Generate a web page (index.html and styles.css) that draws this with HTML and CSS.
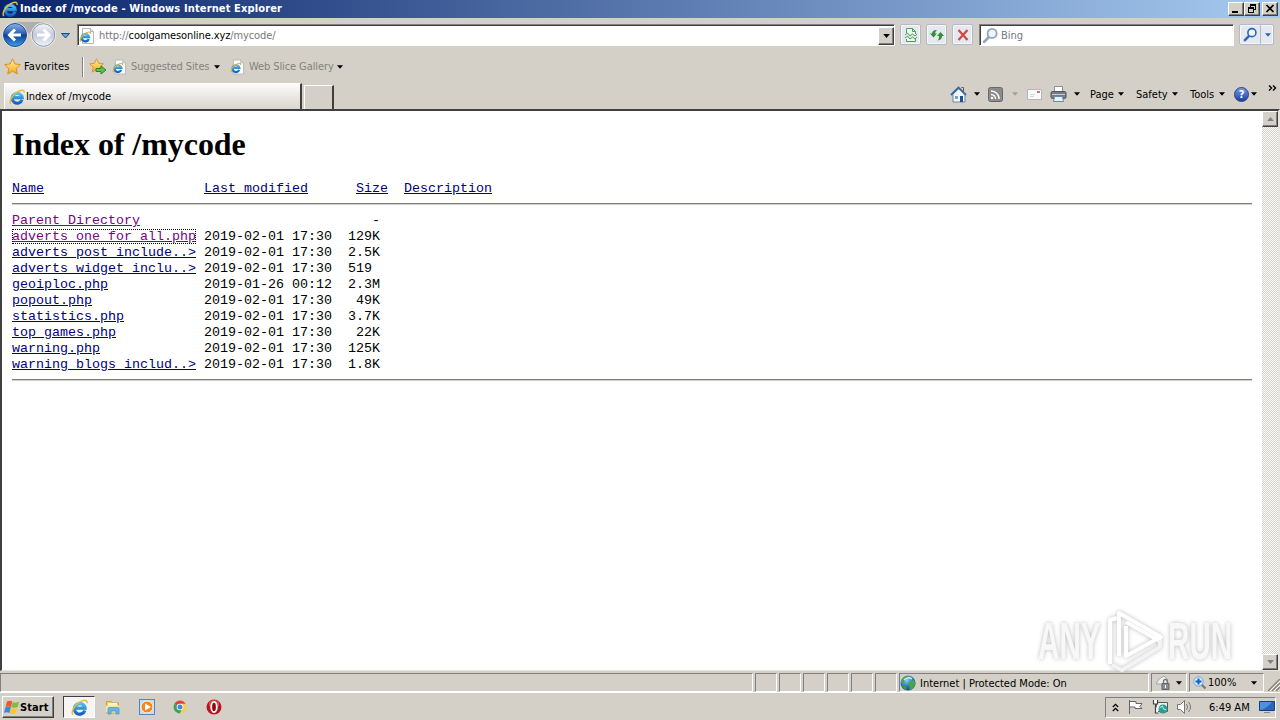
FILE: index.html
```
<!DOCTYPE html>
<html lang="en">
<head>
    <meta charset="UTF-8">
    <title>Index of /mycode</title>
    <link rel="stylesheet" href="styles.css">
</head>
<body>
    <svg class="defs" width="0" height="0">
        <defs>
            <linearGradient id="blue-ball" x1="0" y1="0" x2="0" y2="1">
                <stop offset="0" stop-color="#8fb4e6"/>
                <stop offset=".45" stop-color="#2a5fb4"/>
                <stop offset=".5" stop-color="#0d3c92"/>
                <stop offset="1" stop-color="#3fa0e8"/>
            </linearGradient>
            <linearGradient id="grey-ball" x1="0" y1="0" x2="0" y2="1">
                <stop offset="0" stop-color="#f4f6fa"/>
                <stop offset=".5" stop-color="#c3cad8"/>
                <stop offset="1" stop-color="#f2f5fa"/>
            </linearGradient>
            <linearGradient id="star-fill" x1="0" y1="0" x2="0" y2="1">
                <stop offset="0" stop-color="#fff3a0"/>
                <stop offset="1" stop-color="#f9a81a"/>
            </linearGradient>
            <linearGradient id="e-fill" x1="0" y1="0" x2="0" y2="1">
                <stop offset="0" stop-color="#4cc0f4"/>
                <stop offset="1" stop-color="#1560bd"/>
            </linearGradient>
            <radialGradient id="globe-fill" cx=".4" cy=".3" r=".8">
                <stop offset="0" stop-color="#8fd0f5"/>
                <stop offset=".6" stop-color="#2467b8"/>
                <stop offset="1" stop-color="#123a80"/>
            </radialGradient>
        </defs>
        <symbol id="ie" viewBox="0 0 16 16">
            <path d="M13 10.800A5 5 0 1 1 13.200 8.600H4.400" fill="none" stroke="url(#e-fill)" stroke-width="3.100"/>
            <path d="M2 14.800C-.6 13 3 6.200 8 3C11.500.9 15.800 0 15 4" fill="none" stroke="#efbd30" stroke-width="1.400"/>
        </symbol>
        <symbol id="ie-page" viewBox="0 0 16 16">
            <path d="M3.500.5h8l3 3v12h-11z" fill="#fff" stroke="#b4b4ba"/>
            <path d="M11.500.5v3h3" fill="#ddd" stroke="#b4b4ba"/>
            <path d="M9.800 11A3.700 3.700 0 1 1 10 9H3.800" fill="none" stroke="url(#e-fill)" stroke-width="2.400"/>
            <path d="M1.500 13.700C0 11 4 6.500 8 4.500C10 3.600 11.800 3.600 11.300 6" fill="none" stroke="#e0b030" stroke-width="1.100"/>
        </symbol>
        <symbol id="star" viewBox="0 0 16 16">
            <path d="M8 .8l2.200 4.800 5.100.6-3.800 3.600 1 5.200L8 12.400 3.500 15l1-5.200L.7 6.200l5.100-.6z" fill="url(#star-fill)" stroke="#d98a1c" stroke-width=".9"/>
        </symbol>
        <symbol id="arrow" viewBox="0 0 5 3"><path d="M0 0h5L2.500 3z" fill="currentColor"/></symbol>
        <symbol id="glass" viewBox="0 0 16 16">
            <path d="M6.800 9.200L2 14" stroke="currentColor" stroke-width="2.600" stroke-linecap="round"/>
            <circle cx="9.500" cy="6" r="4.300" fill="#eef5ff" stroke="currentColor" stroke-width="1.700"/>
        </symbol>
    </svg>

    <div class="titlebar">
        <svg class="title-icon" width="16" height="16"><use href="#ie"/></svg>
        <span class="title-text">Index of /mycode - Windows Internet Explorer</span>
        <div class="window-buttons">
            <svg class="bevel" width="16" height="14" viewBox="0 0 14 12"><path d="M3 8h6v2H3z"/></svg>
            <svg class="bevel" width="16" height="14" viewBox="0 0 14 12"><path d="M5 1h6v6H9V6h1V3H6v1H5zM3 4h6v6H3zm1 2v3h4V6z" fill-rule="evenodd"/></svg>
            <svg class="bevel close" width="16" height="14" viewBox="0 0 14 12"><path d="M3.500 2l7 7M10.500 2l-7 7" stroke="#000" stroke-width="1.700"/></svg>
        </div>
    </div>

    <div class="navbar">
        <svg class="travel" width="74" height="30" viewBox="0 0 74 30">
            <path d="M14 2h30v4q-9-1-15 8Q24 6 14 6z" fill="#b2aeb0"/>
            <circle cx="15" cy="15" r="12.500" fill="#edf0f5"/>
            <circle cx="15" cy="15" r="11.500" fill="url(#blue-ball)" stroke="#254a85"/>
            <path d="M21 15H10M15 9.500L9.500 15l5.500 5.500" fill="none" stroke="#fff" stroke-width="3"/>
            <circle cx="43.500" cy="15" r="12.500" fill="#edf0f5"/>
            <circle cx="43.500" cy="15" r="11.300" fill="url(#grey-ball)" stroke="#8b96ab"/>
            <path d="M37 15h11M43.500 9.500L49 15l-5.500 5.500" fill="none" stroke="#fff" stroke-width="3"/>
            <path d="M61.500 13.500h8l-4 4.500z" fill="#5aa5d8" stroke="#1b4b80"/>
        </svg>
        <div class="field address">
            <svg width="16" height="16"><use href="#ie-page"/></svg>
            <span class="url">http://<b>coolgamesonline.xyz</b>/mycode/</span>
            <div class="bevel combo"><svg width="7" height="4"><use href="#arrow"/></svg></div>
        </div>
        <div class="tool-button">
            <svg width="14" height="16" viewBox="0 0 14 16" fill="none" stroke="#4fa052">
                <path d="M2.500 6V1.500h6l3 3V7M8.500 1.500v3h3M2.500 12v2.500h9V12" fill="#eef8ee"/>
                <path d="M1 8l2.500-2L6 9l2.500-2L11 9l2-2M1 11l2.500-2L6 12l2.500-2 2.500 2 2-2"/>
            </svg>
        </div>
        <div class="tool-button">
            <svg width="16" height="14" viewBox="0 0 16 14" fill="#2f8f35">
                <path d="M1 5.500l3.500 4 3.500-4H6q0-2 2-3.500Q3.500 1.500 3 5.500z"/>
                <path d="M8 8l3.500-4L15 8h-2q0 4-4.500 4.500Q10.300 11 10 8z"/>
            </svg>
        </div>
        <div class="tool-button">
            <svg width="14" height="14" viewBox="0 0 14 14"><path d="M2.500 2l9 10M11.500 2l-9 10" stroke="#cf4a45" stroke-width="2.300"/></svg>
        </div>
        <div class="field search">
            <svg class="pale-glass" width="17" height="17"><use href="#glass"/></svg>
            <span>Bing</span>
        </div>
        <div class="tool-button search-go">
            <svg class="blue-glass" width="15" height="15"><use href="#glass"/></svg>
            <i></i>
            <svg class="blue-arrow" width="6" height="4"><use href="#arrow"/></svg>
        </div>
    </div>

    <div class="favbar">
        <svg width="17" height="17"><use href="#star"/></svg>
        <span class="fav-label">Favorites</span>
        <i class="divider"></i>
        <svg width="18" height="17" viewBox="0 0 18 17">
            <use href="#star" width="15" height="15"/>
            <path d="M7 10.500h5V8l5 4-5 4v-2.500H7z" fill="#5cc449" stroke="#28852b"/>
        </svg>
        <svg class="fav-page" width="15" height="16"><use href="#ie-page"/></svg>
        <span class="fav-link suggested">Suggested Sites</span>
        <svg width="6" height="4"><use href="#arrow"/></svg>
        <svg class="fav-page second" width="15" height="16"><use href="#ie-page"/></svg>
        <span class="fav-link slice">Web Slice Gallery</span>
        <svg width="6" height="4"><use href="#arrow"/></svg>
    </div>

    <div class="tabbar">
        <div class="tab">
            <svg width="16" height="16"><use href="#ie"/></svg>
            <span>Index of /mycode</span>
        </div>
        <div class="new-tab"></div>
        <div class="commands">
            <svg width="17" height="17" viewBox="0 0 17 17">
                <path d="M3 8v8h12V8L9 2.500z" fill="#f3f6fb" stroke="#6f86a8"/>
                <path d="M1 9l7.500-7.500L16 9" fill="none" stroke="#36679f" stroke-width="1.800"/>
                <path d="M11.500 1.500h2v4" stroke="#884b3b" fill="none"/>
                <path d="M5 10h3v3H5z" fill="#6fa6d8"/><path d="M10 10h3v6h-3z" fill="#234f8c"/>
            </svg>
            <svg class="caret home-caret" width="6" height="4"><use href="#arrow"/></svg>
            <svg class="feed" width="15" height="15" viewBox="0 0 15 15">
                <rect x=".5" y=".5" width="14" height="14" rx="2" fill="#8b8b8b" stroke="#686868"/>
                <path d="M3 7.500A4.500 4.500 0 0 1 7.500 12M3 4A8 8 0 0 1 11 12" fill="none" stroke="#fff" stroke-width="1.500"/>
                <circle cx="4" cy="11" r="1.300" fill="#fff"/>
            </svg>
            <svg class="caret faded" width="6" height="4"><use href="#arrow"/></svg>
            <svg class="mail" width="15" height="11" viewBox="0 0 15 11">
                <path d="M.5.5h14v10H.5z" fill="#fbfbfb" stroke="#b4b4b8"/>
                <path d="M10 2h3v2h-3z" fill="#d86f78"/><path d="M3 5.500h5M3 7.500h4" stroke="#d4d4dc"/>
            </svg>
            <svg class="printer" width="17" height="17" viewBox="0 0 17 17">
                <path d="M4.500 6V.5h8V6" fill="#fff" stroke="#8a8f98"/>
                <rect x="1" y="5.500" width="15" height="7" rx="1.500" fill="#777c84" stroke="#50545c"/>
                <path d="M2 8.500h13" stroke="#c9cdd5"/>
                <path d="M4.500 10.500h8l1 5h-10z" fill="#e8f2fc" stroke="#6689aa"/>
            </svg>
            <svg class="caret print-caret" width="6" height="4"><use href="#arrow"/></svg>
            <span class="menu page">Page</span><svg class="caret" width="6" height="4"><use href="#arrow"/></svg>
            <span class="menu safety">Safety</span><svg class="caret" width="6" height="4"><use href="#arrow"/></svg>
            <span class="menu tools">Tools</span><svg class="caret" width="6" height="4"><use href="#arrow"/></svg>
            <div class="help">?</div>
            <svg class="caret help-caret" width="6" height="4"><use href="#arrow"/></svg>
            <svg class="chevron" width="9" height="7" viewBox="0 0 9 7"><path d="M1 .5l2.500 2.500L1 5.500M5 .5l2.500 2.500L5 5.500" fill="none" stroke="#000" stroke-width="1.400"/></svg>
        </div>
    </div>

    <div class="viewport">
        <div class="document">
            <h1>Index of /mycode</h1>
            <pre class="head"><a href="#">Name</a>                    <a href="#">Last modified</a>      <a href="#">Size</a>  <a href="#">Description</a></pre>
            <hr>
            <pre class="listing"><a href="#" class="visited">Parent Directory</a>                             -
<a href="#" class="visited focused">adverts_one_for_all.php</a> 2019-02-01 17:30  129K
<a href="#">adverts_post_include..&gt;</a> 2019-02-01 17:30  2.5K
<a href="#">adverts_widget_inclu..&gt;</a> 2019-02-01 17:30  519
<a href="#">geoiploc.php</a>            2019-01-26 00:12  2.3M
<a href="#">popout.php</a>              2019-02-01 17:30   49K
<a href="#">statistics.php</a>          2019-02-01 17:30  3.7K
<a href="#">top_games.php</a>           2019-02-01 17:30   22K
<a href="#">warning.php</a>             2019-02-01 17:30  125K
<a href="#">warning_blogs_includ..&gt;</a> 2019-02-01 17:30  1.8K</pre>
            <hr>
        </div>
        <div class="scrollbar">
            <div class="bevel"><svg class="up" width="7" height="4"><use href="#arrow"/></svg></div>
            <div class="bevel"><svg width="7" height="4"><use href="#arrow"/></svg></div>
        </div>
        <div class="watermark">
            <span class="any">ANY</span>
            <svg width="58" height="62" viewBox="0 0 58 62" fill="none" stroke="#fff" stroke-width="4" stroke-linejoin="round">
                <path d="M3 54V10l7-2"/>
                <path d="M12 46V3l42 24-3 3L19 12"/>
                <path d="M19 16v30l29-16"/>
                <path d="M5 55l10 5 38-23v-7" stroke="#f3f3f3"/>
            </svg>
            <span class="run">RUN</span>
        </div>
    </div>

    <div class="statusbar">
        <div class="pane main"></div>
        <div class="pane"></div>
        <div class="pane"></div>
        <div class="pane"></div>
        <div class="pane"></div>
        <div class="pane"></div>
        <div class="pane"></div>
        <div class="pane zone">
            <svg width="16" height="16" viewBox="0 0 16 16">
                <circle cx="8" cy="8" r="7.500" fill="url(#globe-fill)"/>
                <path d="M2 4q4-4 7-3L7 4 5 5 4 8 1 8zM9 7l5-2 1.500 4-3 5-3 1V11L8 9z" fill="#44a847"/>
                <path d="M3 10l3 1 1 4q-4-1-5-5z" fill="#399b48"/>
                <path d="M4 5q4-4 8-1" fill="none" stroke="#d4f1fb" stroke-width="1.500"/>
            </svg>
            <span>Internet | Protected Mode: On</span>
        </div>
        <div class="pane lock">
            <svg width="17" height="15" viewBox="0 0 17 15">
                <path d="M1 9q2-6 8-8l3 3v5H7z" fill="#eee" stroke="#a5a5a5"/>
                <path d="M7 8.500h7v6H7z" fill="#8c8c8c" stroke="#666"/>
                <path d="M8.500 8V6.500a2 2 0 0 1 4 0V8" fill="none" stroke="#777" stroke-width="1.300"/>
                <path d="M10 10h1v3h-1z" fill="#fff"/>
            </svg>
            <svg width="6" height="4"><use href="#arrow"/></svg>
        </div>
        <div class="pane zoom">
            <svg width="14" height="14" viewBox="0 0 14 14">
                <path d="M8.500 8.500l4 4" stroke="#777" stroke-width="2.300"/>
                <circle cx="5.500" cy="5.500" r="4.700" fill="#d9edff" stroke="#71a2d4"/>
                <path d="M5.500 2.500v6M2.500 5.500h6" stroke="#145fb8" stroke-width="2"/>
            </svg>
            <span>100%</span>
            <svg width="6" height="4"><use href="#arrow"/></svg>
        </div>
        <svg class="grip" width="12" height="12"><path d="M0 12L12 0M4 12l8-8M8 12l4-4" stroke="#85817b" stroke-width="1.500"/><path d="M2 12L12 2M6 12l6-6" stroke="#fff"/></svg>
    </div>

    <div class="taskbar">
        <div class="bevel start">
            <svg width="16" height="15" viewBox="0 0 16 15">
                <path d="M3 1.500q3-1.500 5.300 0L7 7.200Q4.500 5.700 1.500 7z" fill="#e75b2d"/>
                <path d="M8.700 2q3 1.500 6.500-.5L13.700 7q-3 1.500-6.200.3z" fill="#7fbd3e"/>
                <path d="M1.300 7.600q3-1.500 5.500 0L5.500 13Q3 11.500 0 13z" fill="#3b89d8"/>
                <path d="M7.300 8q3 1.300 6.100 0L12 13.300q-3 1.500-6 .2z" fill="#f7c831"/>
            </svg>
            <span>Start</span>
        </div>
        <div class="active-task"><svg width="17" height="17"><use href="#ie"/></svg></div>
        <svg class="launch" width="18" height="18" viewBox="0 0 18 18">
            <path d="M2.500 3.500h5l1 1.500h6v10h-12z" fill="#f2d375" stroke="#c99d42"/>
            <path d="M4 5h9v4H4z" fill="#fff5c5"/><path d="M2 7.500h13v7H2z" fill="#f8e39a"/>
            <path d="M4 16v-5q0-1.500 1.500-1.500h8Q15 9.500 15 11v5h-3v-3H7v3z" fill="#67b7e6" stroke="#418fc0" stroke-width=".7"/>
        </svg>
        <svg class="launch" width="18" height="18" viewBox="0 0 18 18">
            <rect x="1.500" y="1.500" width="15" height="15" fill="#c3def4" stroke="#4f89bd"/>
            <circle cx="9" cy="9" r="6" fill="#ef8a22" stroke="#fff3dc"/><path d="M7 5.500v7L13 9z" fill="#fff"/>
        </svg>
        <svg class="launch" width="18" height="18" viewBox="0 0 18 18">
            <path d="M9 9L3.400 5.800A6.500 6.500 0 0 1 14.600 5.800z" fill="#dc4437"/>
            <path d="M3.400 5.800A6.500 6.500 0 0 0 9 15.500L11.500 10z" fill="#36a654"/>
            <path d="M14.600 5.800A6.500 6.500 0 0 1 9 15.500L12 9 9 5.800z" fill="#f9cf3c"/>
            <circle cx="9" cy="9" r="3.300" fill="#fff"/><circle cx="9" cy="9" r="2.500" fill="#4285e8"/>
        </svg>
        <svg class="launch" width="18" height="18" viewBox="0 0 18 18">
            <circle cx="9" cy="9" r="7.500" fill="#b8161d"/><path d="M4 4q5-4 10 0v4H4z" fill="#d9484c"/>
            <ellipse cx="9" cy="9" rx="2.800" ry="5.200" fill="#94070d" stroke="#fff" stroke-width="1.800"/>
        </svg>
        <div class="tray">
            <svg width="7" height="9" viewBox="0 0 7 9"><path d="M.8 4l2.700-2.700L6.200 4M.8 8l2.700-2.700L6.200 8" fill="none" stroke="#000" stroke-width="1.300"/></svg>
            <svg class="flag" width="16" height="16" viewBox="0 0 16 16"><path d="M1.500 1v14M2 2.500h6v2h6l-2 3 2 2H7V8H2" fill="#fff" stroke="#666"/></svg>
            <svg class="network" width="17" height="16" viewBox="0 0 17 16">
                <path d="M4.500 3.500h11v9h-11z" fill="#e5f3f2" stroke="#555"/>
                <circle cx="11" cy="10" r="4.500" fill="#2b9b95"/><path d="M7.500 9l3-2 1 3 3 1" stroke="#c5efe4" fill="none"/>
                <path d="M1.500 1v4h4V1M3.500 5v9h3" fill="#fff" stroke="#444" stroke-width="1.200"/>
            </svg>
            <svg class="volume" width="17" height="16" viewBox="0 0 17 16">
                <path d="M1.500 5.500h3l4-4v13l-4-4h-3z" fill="#fff" stroke="#777"/>
                <path d="M10.500 5q2 3 0 6M12.500 3q4 5 0 10" fill="none" stroke="#777"/>
            </svg>
            <span class="clock">6:49 AM</span>
            <svg class="desktop" width="16" height="14" viewBox="0 0 16 14">
                <path d="M.5 1.500h15v9H.5z" fill="#2867bd" stroke="#183e7e"/><path d="M1 10q6-1 12-8H1z" fill="#4d91df"/><path d="M5 12.500h6" stroke="#888"/>
            </svg>
        </div>
    </div>
</body>
</html>
```
FILE: styles.css
```
* {
    box-sizing: border-box;
}

body {
    margin: 0;
    width: 1280px;
    height: 720px;
    overflow: hidden;
    display: flex;
    flex-direction: column;
    background-color: #d4d0c8;
    color: #000;
    font-family: "DejaVu Sans Condensed", "DejaVu Sans", sans-serif;
    font-stretch: condensed;
    font-size: 11px;
    white-space: nowrap;
}

svg, i {
    display: block;
    flex-shrink: 0;
}

.defs {
    position: absolute;
}

.bevel {
    background: #d4d0c8;
    border: 1px solid;
    border-color: #fff #404040 #404040 #fff;
    box-shadow: inset -1px -1px #808080;
}

/* title bar */
.titlebar {
    height: 18px;
    display: flex;
    align-items: center;
    padding: 0 2px;
    background: linear-gradient(to right, #0a246a, #a6caf0);
    color: #fff;
    font-weight: bold;
}

.title-text {
    margin-left: 2px;
    padding-bottom: 1px;
    letter-spacing: .13px;
}

.window-buttons {
    display: flex;
    margin-left: auto;
}

.close {
    margin-left: 2px;
}

/* address bar */
.navbar {
    height: 34px;
    display: flex;
    align-items: center;
    padding-bottom: 1px;
}

.field {
    height: 22px;
    display: flex;
    align-items: center;
    background: #fff;
    border: 1px solid;
    border-color: #808080 #fff #fff #808080;
    box-shadow: inset 1px 1px #404040;
    color: #777;
}

.address {
    width: 818px;
    margin: 1px 5px 0 3px;
    padding: 1px 0 0 1px;
}

.url {
    margin-left: 4px;
    letter-spacing: -.11px;
}

.url b {
    color: #000;
    font-weight: normal;
}

.combo {
    width: 16px;
    height: 18px;
    margin-left: auto;
    padding: 6px 4px;
    color: #000;
}

.tool-button {
    width: 21px;
    height: 21px;
    margin-right: 5px;
    display: flex;
    align-items: center;
    justify-content: center;
    background: #e5e9ef;
    border: 1px solid #b2bac9;
    border-radius: 2px;
    box-shadow: inset 0 0 0 1px #f5f7fa;
}

.search {
    width: 255px;
    margin: 1px 5px 0 1px;
    padding-left: 2px;
}

.search span {
    margin-left: 2px;
}

.pale-glass {
    color: #91a5bc;
}

.search-go {
    width: 35px;
    margin: 0;
}

.search-go i {
    width: 1px;
    height: 19px;
    margin: 0 4px 0 2px;
    background: #b2bac9;
}

.blue-glass, .blue-arrow {
    color: #2b63b5;
}

/* favorites bar */
.favbar {
    height: 30px;
    display: flex;
    align-items: center;
    padding: 0 0 1px 4px;
}

.fav-label {
    width: 50px;
    margin-left: 3px;
    letter-spacing: .1px;
}

.divider {
    width: 2px;
    height: 20px;
    margin: 0 5px 0 8px;
    background: #808080;
    border-right: 1px solid #fff;
}

.fav-page {
    margin-left: 5px;
}

.fav-page.second {
    margin-left: 10px;
}

.fav-link {
    margin-left: 4px;
    color: #858279;
}

.suggested {
    width: 83px;
    letter-spacing: -.1px;
}

.slice {
    width: 88px;
    letter-spacing: -.1px;
}

/* tabs and command bar */
.tabbar {
    height: 27px;
    display: flex;
    align-items: flex-end;
    padding-left: 4px;
}

.tab {
    width: 298px;
    height: 26px;
    display: flex;
    align-items: center;
    padding-left: 4px;
    background: linear-gradient(#fcfbfa, #d9d5ce);
    border-top: 1px solid #fff;
    border-left: 1px solid #fff;
    border-right: 2px solid #404040;
}

.tab span {
    margin-left: 1px;
    letter-spacing: -.05px;
}

.new-tab {
    width: 30px;
    height: 24px;
    margin-left: 2px;
    border: 1px solid #fff;
    border-right: 2px solid #404040;
    border-bottom: 0;
}

.commands {
    height: 27px;
    display: flex;
    align-items: center;
    margin-left: 616px;
    padding-bottom: 3px;
}

.home-caret {
    margin-left: 7px;
}

.feed {
    margin: 1px 9px 0 8px;
}

.faded {
    color: #a39f98;
}

.mail {
    margin-left: 9px;
}

.printer {
    margin: 0 7px 0 8px;
}

.menu {
    margin-left: 10px;
}

.page {
    width: 28px;
}

.safety {
    width: 36px;
    margin-left: 12px;
}

.tools {
    width: 29px;
    margin-left: 12px;
}

.help {
    width: 15px;
    height: 15px;
    margin: 0 2px 0 9px;
    border: 1px solid #263f86;
    border-radius: 50%;
    background: linear-gradient(#7a9de0, #173fa5);
    color: #fff;
    font-weight: bold;
    line-height: 13px;
    text-align: center;
}

.chevron {
    align-self: flex-start;
    margin: 3px 0 0 11px;
}

/* page */
.viewport {
    position: relative;
    height: 562px;
    display: flex;
    border: solid;
    border-width: 2px 2px 1px 2px;
    border-color: #404040 #e8e5e0 #e8e5e0 #404040;
    background: #fff;
}

.document {
    flex: 1;
    padding: 15px 10px 0;
}

h1 {
    margin: 0;
    font: bold 32px/37px "Liberation Serif", serif;
    letter-spacing: -.06px;
}

pre {
    position: relative;
    margin: 0;
    font: 13.333px/16px "Liberation Mono", monospace;
}

.head {
    margin-top: 18px;
}

hr {
    margin: 6px 0 8px;
    height: 2px;
    border: 0;
    border-top: 1px solid #808080;
    border-bottom: 1px solid #d4d0c8;
}

a {
    color: #000080;
}

.visited {
    color: #800080;
}

.focused {
    outline: 1px dotted #000;
    outline-offset: -1px;
}

.scrollbar {
    width: 16px;
    display: flex;
    flex-direction: column;
    justify-content: space-between;
    background: repeating-conic-gradient(#fff 0 25%, #d4d0c8 0 50%) 0 0 / 2px 2px;
}

.scrollbar .bevel {
    height: 16px;
    padding: 5px 4px;
    color: #808080;
}

.up {
    transform: rotate(180deg);
}

.watermark {
    position: absolute;
    left: 1036px;
    top: 499px;
    display: flex;
    align-items: center;
    color: #f8f8f8;
    font: bold 52px/62px "Liberation Sans", sans-serif;
    filter: drop-shadow(0 0 2px #bbb);
}

.watermark svg {
    margin: 0 3px;
}

.any, .run {
    width: 66px;
    transform: scaleX(.57);
    transform-origin: left;
}

/* status bar */
.statusbar {
    height: 22px;
    display: flex;
    align-items: center;
    gap: 2px;
    padding-top: 1px;
    border-top: 1px solid #d4d0c8;
    border-bottom: 1px solid #fff;
}

.pane {
    width: 22px;
    height: 19px;
    display: flex;
    align-items: center;
    border: 1px solid;
    border-color: #808080 #fff #fff #808080;
}

.pane.main {
    width: 753px;
}

.zone {
    width: 250px;
}

.zone span {
    margin: 1px 0 0 4px;
}

.lock {
    width: 36px;
    padding-left: 3px;
    gap: 4px;
}

.zoom {
    width: 75px;
    padding-left: 3px;
}

.zoom span {
    width: 44px;
    margin-left: 1px;
}

.zoom svg:last-child {
    margin-left: -1px;
}

.grip {
    margin: 5px 0 0 auto;
}

/* taskbar */
.taskbar {
    height: 27px;
    display: flex;
    align-items: center;
    padding: 0 4px 0 2px;
    border-top: 1px solid #d4d0c8;
}

.start {
    width: 52px;
    height: 22px;
    display: flex;
    align-items: center;
    padding-left: 1px;
    font-weight: bold;
}

.start span {
    margin-left: 0;
    letter-spacing: .1px;
}

.active-task {
    width: 32px;
    height: 22px;
    margin: 0 9px;
    padding: 2px 0 0 7px;
    background: #f6f5f3;
    border: 1px solid;
    border-color: #404040 #fff #fff #404040;
}

.launch {
    margin-right: 15.700px;
}

.tray {
    width: 171px;
    height: 21px;
    display: flex;
    align-items: center;
    margin-left: auto;
    padding-left: 6px;
    border: 1px solid;
    border-color: #808080 #fff #fff #808080;
}

.flag {
    margin-left: 9px;
}

.network {
    margin-left: 8px;
}

.volume {
    margin-left: 7px;
}

.clock {
    width: 42px;
    margin-left: 16px;
}

.desktop {
    margin-left: 9px;
}
```
